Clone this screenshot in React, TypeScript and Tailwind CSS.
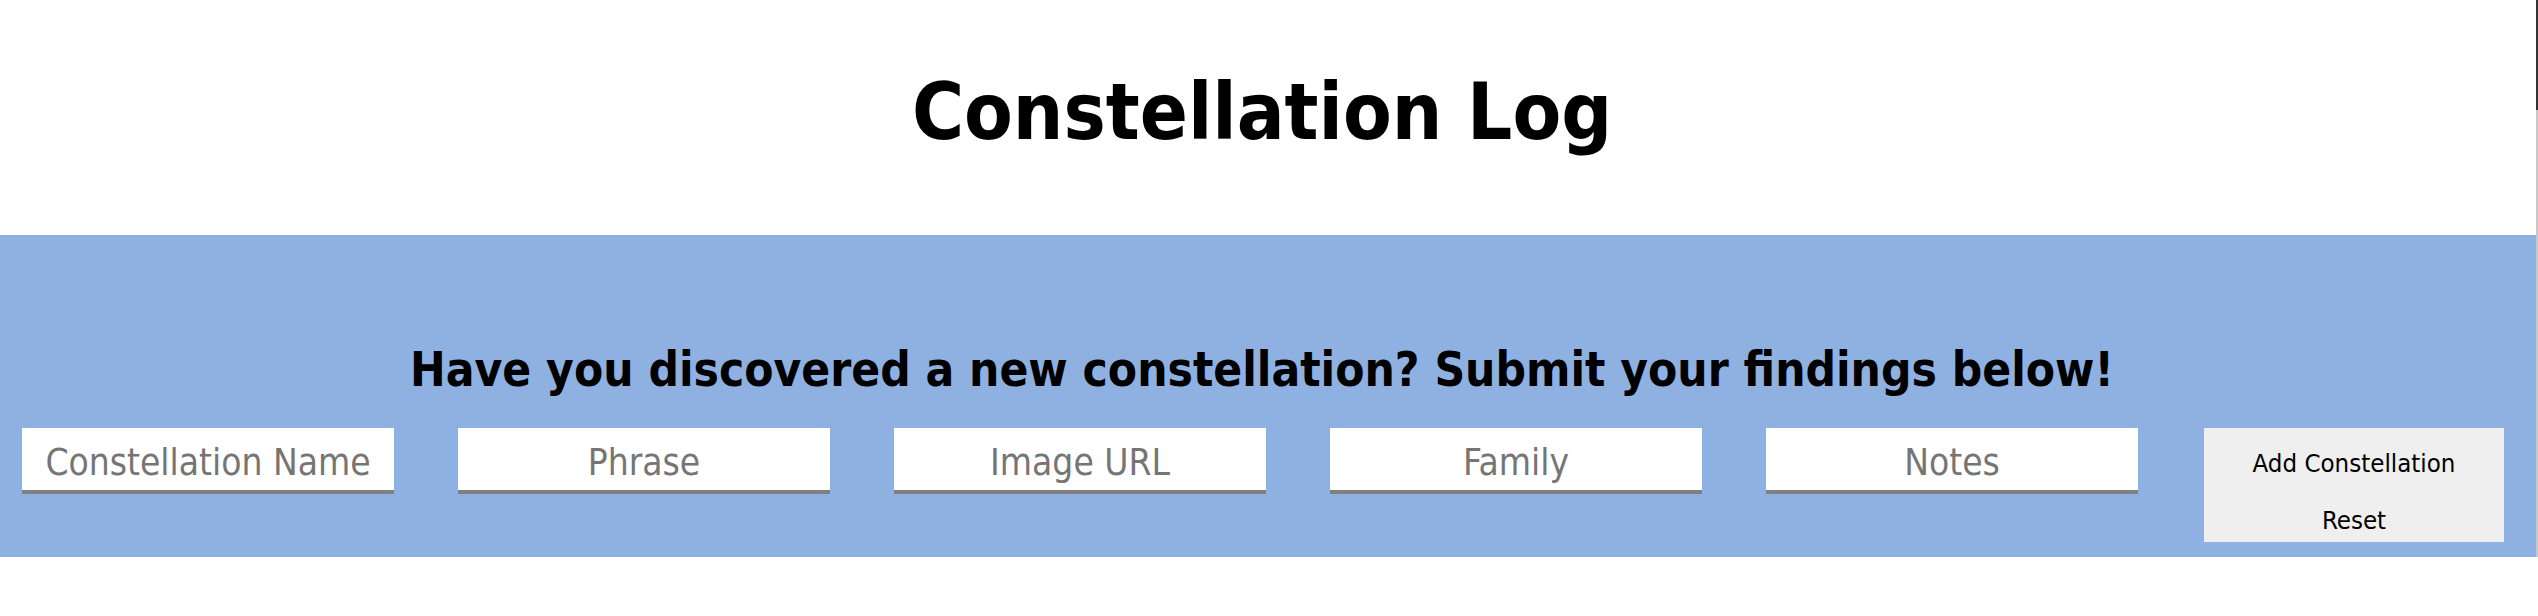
import React from "react";

const fields = ["Constellation Name", "Phrase", "Image URL", "Family", "Notes"];

export default function App() {
  return (
    <div className="flex w-[2538px] bg-white" style={{ fontFamily: '"DejaVu Sans Condensed", "DejaVu Sans", sans-serif' }}>
      <div className="w-[2536px]">
        <h1 className="pt-[66px] pr-[12px] text-center text-[79px] font-bold leading-[93px] text-black">
          Constellation Log
        </h1>
        <form className="mt-[76px] h-[322px] bg-[#8fb1e1] pt-[107px]">
          <h2 className="pr-[12px] text-center text-[47.4px] font-bold leading-[55px] text-black">
            Have you discovered a new constellation? Submit your findings below!
          </h2>
          <div className="mt-[31px] flex items-start gap-[64px] pl-[22px]">
            {fields.map((f) => (
              <input
                key={f}
                placeholder={f}
                className="h-[66px] w-[372px] border-b-4 border-[#808080] bg-white px-0 pt-[6px] text-center text-[36.8px] text-black outline-none placeholder:text-[#757575]"
              />
            ))}
            <div className="ml-[2px] flex w-[300px] flex-col bg-[#efefef]">
              <button type="button" className="h-[57px] pt-[14px] text-[25.6px] text-black">
                Add Constellation
              </button>
              <button type="button" className="h-[57px] pt-[13px] text-[25.6px] text-black">
                Reset
              </button>
            </div>
          </div>
        </form>
      </div>
      <div className="flex w-[2px] flex-col">
        <div className="h-[110px] bg-[#333333]" />
        <div className="flex-1 bg-[#c8c8c8]" />
      </div>
    </div>
  );
}
